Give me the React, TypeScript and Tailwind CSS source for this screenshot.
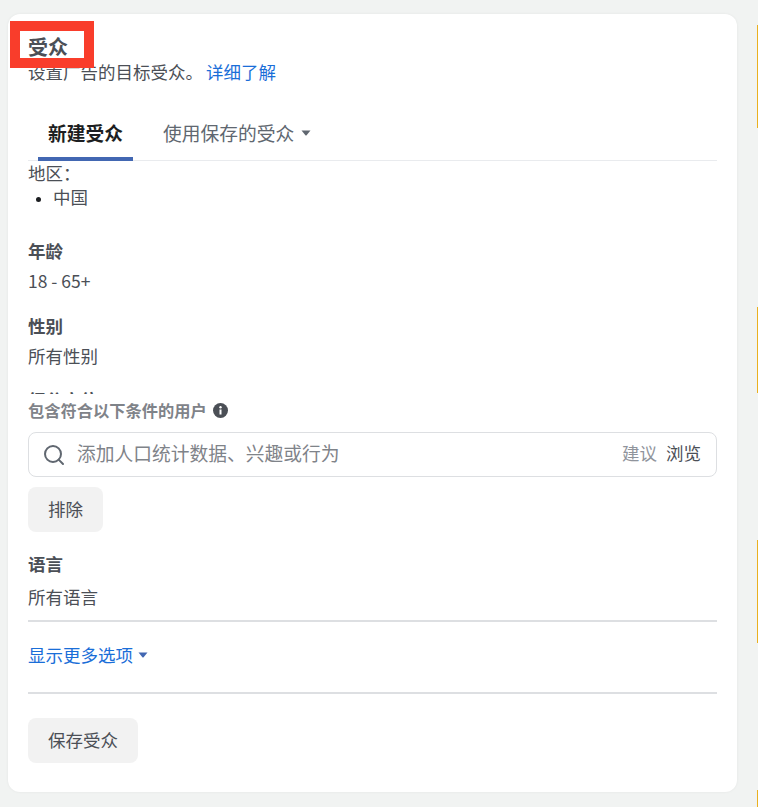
import React from 'react';
import { Search } from 'lucide-react';

const font = 'font-["Noto_Sans_CJK_SC","Liberation_Sans",sans-serif]';

// strip marks of the neighbouring panel, cut off at the window edge
const EdgeMark = ({ h, className = '' }: { h: string; className?: string }) => (
  <div className={`w-px bg-[#eab01f] ${h} ${className}`} />
);

const Caret = ({ color }: { color: string }) => (
  <svg width="10" height="6" viewBox="0 0 10 6" className="shrink-0">
    <path d="M0.5 0.5h9L5.6 5.2a0.8 0.8 0 0 1-1.2 0z" fill={color} />
  </svg>
);

const InfoDot = () => (
  <svg width="15" height="15" viewBox="0 0 15 15" className="shrink-0">
    <circle cx="7.5" cy="7.5" r="7.5" fill="#4b4f56" />
    <rect x="6.5" y="6.5" width="2" height="5" fill="#ffffff" />
    <circle cx="7.5" cy="4.3" r="1.2" fill="#ffffff" />
  </svg>
);

const Section = ({ title, value, className = '' }: { title: string; value: string; className?: string }) => (
  <div className={className}>
    <div className="text-[17.5px] leading-[24px] font-bold text-[#4b4f56]">{title}</div>
    <div className="mt-[6px] text-[17.5px] leading-[24px] text-[#4b4f56]">{value}</div>
  </div>
);

export default function App() {
  return (
    <div className={`relative flex h-[807px] w-[758px] overflow-hidden bg-[#f1f3f2] ${font}`}>
      <div className="mt-[14px] ml-2 flex h-[778px] w-[729px] flex-col rounded-[12px] bg-white px-5 shadow-[0_0_3px_rgba(0,0,0,0.06)]">
        {/* header */}
        <div className="mt-[18px] text-[20px] leading-[30px] font-bold text-[#4b4f56]">受众</div>
        <div className="mt-[-3px] flex h-[26px] items-center text-[17.5px] text-[#4b4f56]">
          <span>设置广告的目标受众。</span>
          <span className="ml-[3px] text-[#1a6ed8]">详细了解</span>
        </div>

        {/* tabs */}
        <div className="mt-[18px] flex h-[58px] items-stretch border-b border-[#e9ebee]">
          <div className="ml-[10px] mb-[-1px] flex w-[95px] items-center justify-center border-b-[4px] border-[#4267b2] pt-[7px] text-[18.75px] font-bold text-[#1c1e21]">
            新建受众
          </div>
          <div className="ml-[30px] flex items-center gap-[7px] pt-[3px] text-[18.75px] text-[#606770]">
            使用保存的受众
            <Caret color="#606770" />
          </div>
        </div>

        {/* scrolling summary, next heading is cut off at the bottom */}
        <div className="h-[233px] overflow-hidden">
          <div className="text-[17.5px] leading-[24px] text-[#4b4f56]">地区：</div>
          <ul className="list-disc pl-[25px] text-[17.5px] leading-[24px] marker:text-[14px] marker:text-[#1c1e21]">
            <li className="text-[#4b4f56]">中国</li>
          </ul>
          <Section title="年龄" value="18 - 65+" className="mt-[30px]" />
          <Section title="性别" value="所有性别" className="mt-[21px]" />
          <div className="mt-[20px] text-[17.5px] leading-[24px] font-bold text-[#4b4f56]">细分定位</div>
        </div>

        {/* detailed targeting */}
        <div className="mt-[5px] flex h-[22px] items-center gap-[6px] text-[16.25px] font-bold text-[#7f8389]">
          包含符合以下条件的用户
          <InfoDot />
        </div>
        <div className="mt-[11px] flex h-[45px] items-center rounded-[8px] border border-[#dddfe2] pr-[15px] pl-[13px]">
          <Search size={24} strokeWidth={2} className="text-[#606770]" />
          <span className="ml-[11px] flex-1 pb-[2px] text-[18.75px] text-[#7f8389]">添加人口统计数据、兴趣或行为</span>
          <span className="pb-[2px] text-[17.5px] text-[#90949c]">建议</span>
          <span className="ml-[9px] pb-[2px] text-[17.5px] text-[#4b4f56]">浏览</span>
        </div>
        <div className="mt-[10px] flex h-[45px] w-[75px] items-center justify-center rounded-[8px] bg-[#f2f2f2] text-[17.5px] text-[#4b4f56]">
          排除
        </div>

        {/* language */}
        <div className="mt-[20px] text-[17.5px] leading-[24px] font-bold text-[#4b4f56]">语言</div>
        <div className="mt-[9px] border-b-2 border-[#dddfe2] pb-[11px] text-[17.5px] leading-[24px] text-[#4b4f56]">所有语言</div>

        <div className="mt-[20px] flex h-[26px] items-center gap-[5px] text-[17.5px] text-[#1a6ed8]">
          显示更多选项
          <Caret color="#4267b2" />
        </div>
        <div className="mt-[24px] border-b-2 border-[#dddfe2]" />

        <div className="mt-[24px] flex h-[45px] w-[110px] items-center justify-center rounded-[8px] bg-[#f2f2f2] text-[17.5px] text-[#4b4f56]">
          保存受众
        </div>
      </div>

      {/* red annotation box drawn over the screenshot */}
      <div className="absolute top-[21px] left-[10px] h-[47px] w-[84px] border-[10px] border-[#f93d2b]" />

      <div className="absolute top-0 right-0 h-full w-px">
        <EdgeMark h="h-[103px]" className="mt-[25px]" />
        <EdgeMark h="h-[86px]" className="mt-[179px]" />
        <EdgeMark h="h-[103px]" className="mt-[147px]" />
        <EdgeMark h="h-[17px]" className="mt-[147px]" />
      </div>
    </div>
  );
}
